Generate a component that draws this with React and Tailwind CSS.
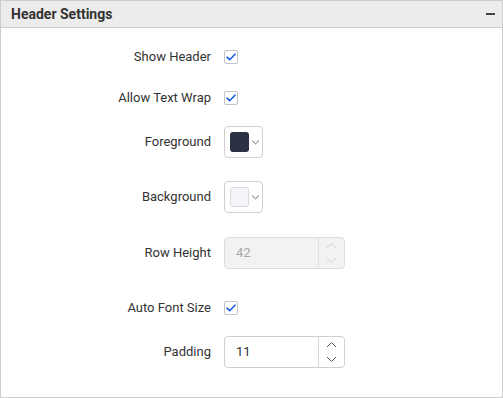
import React from "react";

const font = { fontFamily: "Roboto, 'Liberation Sans', sans-serif" };

function Check() {
  return (
    <div className="w-[14px] h-[14px] border border-[#c4c4c4] rounded-[2px] bg-white flex items-center justify-center">
      <svg width="10" height="8" viewBox="0 0 10 8" fill="none">
        <path d="M1 4.2 L3.7 6.7 L9 1.2" stroke="#1a5ee8" strokeWidth="1.6" strokeLinecap="round" strokeLinejoin="round" />
      </svg>
    </div>
  );
}

function Chevron({ up, color = "#555" }) {
  return (
    <svg width="11" height="7" viewBox="0 0 11 7" fill="none">
      <path d={up ? "M1 6 L5.5 1.5 L10 6" : "M1 1 L5.5 5.5 L10 1"} stroke={color} strokeWidth="1" />
    </svg>
  );
}

function ColorPick({ swatch, light }) {
  return (
    <div className="w-[39px] h-[32px] border border-[#d0d0d0] rounded-[4px] bg-white flex items-center pl-[5px]">
      <div className={`w-[19px] h-[20px] rounded-[3px] ${swatch} ${light ? "border border-[#d6d9de]" : ""}`} />
      <svg className="ml-[2px]" width="9" height="6" viewBox="0 0 9 6" fill="none">
        <path d="M1 1.5 L4.5 4.8 L8 1.5" stroke="#666" strokeWidth="1" />
      </svg>
    </div>
  );
}

function Num({ value, disabled }) {
  return (
    <div
      className={`w-[121px] h-[32px] border rounded-[4px] flex ${
        disabled ? "bg-[#f2f2f2] border-[#dcdcdc]" : "bg-white border-[#cfcfcf]"
      }`}
    >
      <div className={`flex-1 flex items-center pl-[11px] text-[13px] ${disabled ? "text-[#a8a8a8]" : "text-[#333]"}`}>
        {value}
      </div>
      <div className={`w-[26px] border-l flex flex-col items-center justify-center gap-[8px] ${disabled ? "border-[#e0e0e0]" : "border-[#d6d6d6]"}`}>
        <Chevron up color={disabled ? "#cfcfcf" : "#555"} />
        <Chevron color={disabled ? "#cfcfcf" : "#555"} />
      </div>
    </div>
  );
}

function Row({ label, mt, children }) {
  return (
    <div className={`flex items-center h-[32px] ${mt}`}>
      <div className="w-[211px] text-right text-[13px] text-[#333] pr-[1px]">{label}</div>
      <div className="ml-[12px] flex items-center">{children}</div>
    </div>
  );
}

export default function App() {
  return (
    <div style={font} className="w-[503px] h-[398px] border border-[#cdcdcd] bg-white flex flex-col">
      <div className="h-[27px] bg-[#ececec] border-b border-[#cdcdcd] flex items-center justify-between pl-[10px] pr-[7px]">
        <span className="text-[14px] font-bold text-[#333]">Header Settings</span>
        <div className="w-[9px] h-[2px] bg-[#444] mt-[-1px]" />
      </div>
      <div className="flex flex-col">
        <Row label="Show Header" mt="mt-[13px]"><Check /></Row>
        <Row label="Allow Text Wrap" mt="mt-[9px]"><Check /></Row>
        <Row label="Foreground" mt="mt-[12px]"><ColorPick swatch="bg-[#2b3245]" /></Row>
        <Row label="Background" mt="mt-[23px]"><ColorPick swatch="bg-[#f3f5f8]" light /></Row>
        <Row label="Row Height" mt="mt-[24px]"><Num value="42" disabled /></Row>
        <Row label="Auto Font Size" mt="mt-[23px]"><Check /></Row>
        <Row label="Padding" mt="mt-[12px]"><Num value="11" /></Row>
      </div>
    </div>
  );
}
